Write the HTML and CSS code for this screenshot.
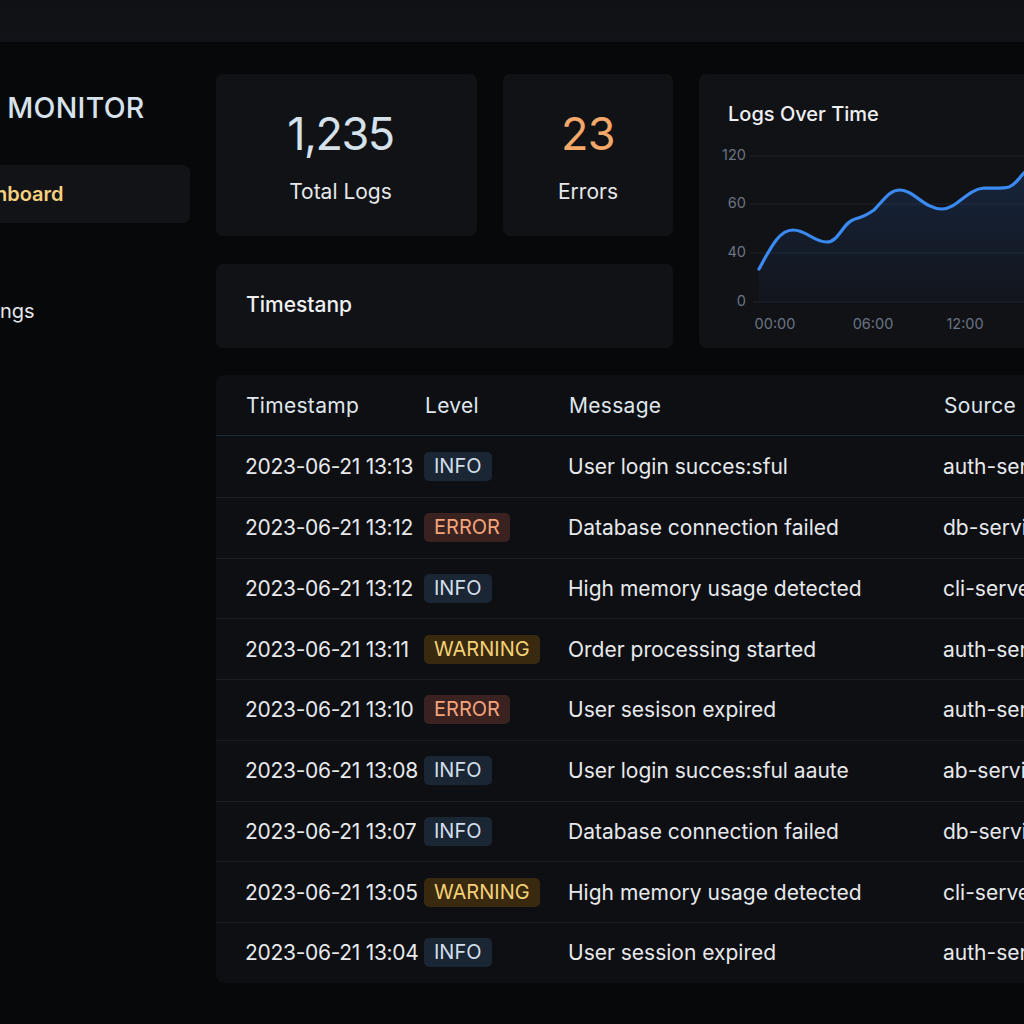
FILE: index.html
```html
<!DOCTYPE html>
<html lang="en">
<head>
<meta charset="utf-8">
<title>Log Monitor</title>
<link rel="stylesheet" href="styles.css">
</head>
<body>
<header class="topbar"></header>
<div class="app">
  <aside class="sidebar">
    <div class="logo">LOG MONITOR</div>
    <nav class="nav">
      <a class="nav-item active">Dashboard</a>
      <a class="nav-item settings">Settings</a>
    </nav>
  </aside>
  <main class="main">
    <section class="overview">
      <div class="card stat stat-total">
        <div class="stat-value">1,235</div>
        <div class="stat-label">Total Logs</div>
      </div>
      <div class="card stat stat-errors">
        <div class="stat-value err">23</div>
        <div class="stat-label">Errors</div>
      </div>
      <div class="card chart-card">
        <h3 class="chart-title">Logs Over Time</h3>
        <svg class="chart" width="500" height="200" viewBox="0 0 500 200">
          <defs>
            <linearGradient id="fill" x1="0" y1="0" x2="0" y2="1">
              <stop offset="0" stop-color="#2f6fd6" stop-opacity="0.22"/>
              <stop offset="1" stop-color="#2f6fd6" stop-opacity="0.03"/>
            </linearGradient>
          </defs>
          <g class="grid">
            <line x1="51" y1="14" x2="500" y2="14"/>
            <line x1="51" y1="62" x2="500" y2="62"/>
            <line x1="51" y1="111" x2="500" y2="111"/>
            <line x1="54" y1="160" x2="500" y2="160"/>
          </g>
          <g class="ylab">
            <text x="47" y="14">120</text>
            <text x="47" y="62">60</text>
            <text x="47" y="111">40</text>
            <text x="47" y="160">0</text>
          </g>
          <g class="xlab">
            <text x="76" y="183">00:00</text>
            <text x="174" y="183">06:00</text>
            <text x="266" y="183">12:00</text>
            <text x="358" y="183">18:00</text>
            <text x="450" y="183">24:00</text>
          </g>
          <path class="area" d="M60,127 C72,105 80,88 94,88 C108,88 114,100 128,100 C140,100 144,80 156,77 C164,75 168,73 175,68 C185,58 190,48 201,48 C215,48 225,67 243,67 C258,67 268,47 285,46 C295,46 303,47 310,45 C318,42 320,35 326,30 C334,22 340,18 352,18 C366,18 372,34 388,34 C404,34 412,12 432,10 C450,8 470,16 500,12 L500,160 L60,160 Z"/>
          <path class="line" d="M60,127 C72,105 80,88 94,88 C108,88 114,100 128,100 C140,100 144,80 156,77 C164,75 168,73 175,68 C185,58 190,48 201,48 C215,48 225,67 243,67 C258,67 268,47 285,46 C295,46 303,47 310,45 C318,42 320,35 326,30 C334,22 340,18 352,18 C366,18 372,34 388,34 C404,34 412,12 432,10 C450,8 470,16 500,12"/>
        </svg>
      </div>
      <div class="card filter">
        <span class="filter-label">Timestanp</span>
      </div>
    </section>

    <section class="table-card">
      <div class="trow thead">
        <div>Timestamp</div><div>Level</div><div>Message</div><div>Source</div>
      </div>
      <div class="trow">
        <div class="ts">2023-06-21 13:13</div><div><span class="badge info">INFO</span></div><div>User login succes:sful</div><div>auth-service</div>
      </div>
      <div class="trow">
        <div class="ts">2023-06-21 13:12</div><div><span class="badge error">ERROR</span></div><div>Database connection failed</div><div>db-service</div>
      </div>
      <div class="trow">
        <div class="ts">2023-06-21 13:12</div><div><span class="badge info">INFO</span></div><div>High memory usage detected</div><div>cli-server</div>
      </div>
      <div class="trow">
        <div class="ts">2023-06-21 13:11</div><div><span class="badge warn">WARNING</span></div><div>Order processing started</div><div>auth-service</div>
      </div>
      <div class="trow">
        <div class="ts">2023-06-21 13:10</div><div><span class="badge error">ERROR</span></div><div>User sesison expired</div><div>auth-service</div>
      </div>
      <div class="trow">
        <div class="ts">2023-06-21 13:08</div><div><span class="badge info">INFO</span></div><div>User login succes:sful aaute</div><div>ab-service</div>
      </div>
      <div class="trow">
        <div class="ts">2023-06-21 13:07</div><div><span class="badge info">INFO</span></div><div>Database connection failed</div><div>db-service</div>
      </div>
      <div class="trow">
        <div class="ts">2023-06-21 13:05</div><div><span class="badge warn">WARNING</span></div><div>High memory usage detected</div><div>cli-server</div>
      </div>
      <div class="trow">
        <div class="ts">2023-06-21 13:04</div><div><span class="badge info">INFO</span></div><div>User session expired</div><div>auth-service</div>
      </div>
    </section>
  </main>
</div>
</body>
</html>
```

FILE: styles.css
```css
* { box-sizing: border-box; }

html, body {
  margin: 0;
  height: 1024px;
  overflow: hidden;
}

body {
  background: #07080a;
  font-family: Inter, "Noto Sans", "Liberation Sans", sans-serif;
  color: #e7e9ec;
}

.topbar {
  height: 43px;
  background: linear-gradient(180deg, #101115 0%, #121318 100%);
  border-bottom: 1px solid #050607;
}

.app {
  display: flex;
  margin-left: -70px;
  width: 1400px;
}

.sidebar {
  width: 260px;
  flex: none;
  padding-top: 48px;
}

.logo {
  padding-left: 10px;
  font-size: 28.5px;
  line-height: 34px;
  font-weight: 500;
  color: #d7e3ec;
  letter-spacing: 0.3px;
  white-space: nowrap;
}

.nav {
  margin-top: 40px;
  display: flex;
  flex-direction: column;
}

.nav-item {
  display: flex;
  align-items: center;
  height: 58px;
  padding-left: 28px;
  font-size: 20px;
  color: #e6e9ec;
  border-radius: 7px;
  white-space: nowrap;
}

.nav-item.active {
  background: #121317;
  color: #f6d17f;
  font-weight: 600;
}

.nav-item.settings {
  margin-top: 59px;
}

.main {
  margin-left: 26px;
  padding-top: 31px;
  width: 1000px;
  flex: none;
}

.overview {
  display: grid;
  grid-template-columns: 261px 170px 500px;
  grid-template-rows: 162px 84px;
  column-gap: 26px;
  row-gap: 28px;
}

.card {
  background: #111216;
  border-radius: 7px;
}

.stat {
  display: flex;
  flex-direction: column;
  align-items: center;
  justify-content: center;
  gap: 20px;
  padding-top: 4px;
}

.stat-total {
  padding-right: 12px;
}

.stat-value {
  font-size: 45px;
  line-height: 50px;
  font-weight: 400;
  color: #d5e1eb;
  letter-spacing: -1.5px;
}

.stat-value.err {
  color: #f4a869;
  letter-spacing: -0.5px;
}

.stat-label {
  font-size: 21px;
  line-height: 26px;
  color: #e6e8eb;
}

.chart-card {
  grid-column: 3;
  grid-row: 1 / span 2;
  overflow: hidden;
}

.chart-title {
  margin: 0;
  padding: 27px 0 0 29px;
  font-size: 20px;
  line-height: 26px;
  font-weight: 500;
  color: #eef0f2;
}

.chart {
  display: block;
  margin-top: 15px;
}

.chart .grid line {
  stroke: #1c222c;
  stroke-width: 1;
}

.chart text {
  font-family: Inter, "Noto Sans", sans-serif;
  font-size: 14.5px;
  fill: #6a7483;
  dominant-baseline: middle;
}

.chart .ylab text { text-anchor: end; }
.chart .xlab text { text-anchor: middle; }

.chart .area { fill: url(#fill); }

.chart .line {
  fill: none;
  stroke: #3a8af2;
  stroke-width: 3.2;
  stroke-linecap: round;
}

.filter {
  grid-column: 1 / span 2;
  grid-row: 2;
  display: flex;
  align-items: center;
  padding-left: 30px;
  padding-bottom: 3px;
}

.filter-label {
  font-size: 21px;
  font-weight: 500;
  color: #eef0f2;
}

.table-card {
  margin-top: 27px;
  background: #0e0f13;
  border-radius: 8px;
  overflow: hidden;
}

.trow {
  display: grid;
  grid-template-columns: 179px 144px 375px 1fr;
  align-items: center;
  height: 60.75px;
  padding-left: 29px;
  border-top: 1px solid #181c23;
  font-size: 21px;
  color: #e7e9ec;
  white-space: nowrap;
}

.trow .ts {
  letter-spacing: -0.3px;
}

.trow.thead {
  height: 61px;
  border-top: none;
  border-bottom: 1px solid #1d2938;
  color: #dfe6ec;
  padding-left: 30px;
  letter-spacing: 0.3px;
}

.thead + .trow {
  border-top: none;
}

.badge {
  display: inline-block;
  padding: 0 10px;
  line-height: 29px;
  border-radius: 5px;
  font-size: 20px;
}

.badge.info { background: #1a2634; color: #d2deea; }
.badge.error { background: #3a2220; color: #f3a47b; }
.badge.warn { background: #38290f; color: #f4d176; }
```
